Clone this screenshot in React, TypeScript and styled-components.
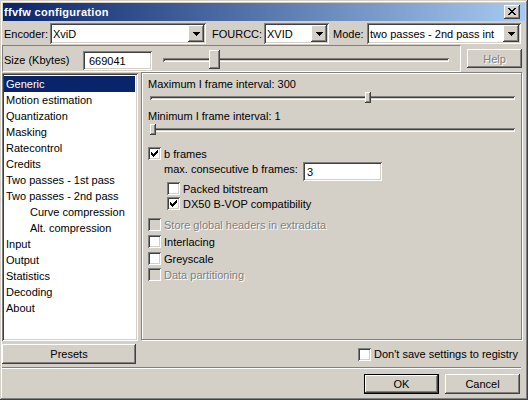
import styled, { createGlobalStyle } from "styled-components";

const GlobalStyle = createGlobalStyle`
  html, body {
    margin: 0;
    padding: 0;
    background: #d4d0c8;
  }
  body {
    font-family: "Liberation Sans", Arial, sans-serif;
    font-size: 11px;
    color: #000;
  }
`;

const raised = `
  box-shadow: inset -1px -1px #404040, inset 1px 1px #fff,
    inset -2px -2px #808080, inset 2px 2px #d4d0c8;
`;

const sunken = `
  box-shadow: inset 1px 1px #808080, inset -1px -1px #fff,
    inset 2px 2px #404040, inset -2px -2px #d4d0c8;
`;

const Window = styled.div`
  box-sizing: border-box;
  width: 528px;
  height: 400px;
  padding: 2px;
  background: #d4d0c8;
  box-shadow: inset -1px -1px #404040, inset 1px 1px #d4d0c8,
    inset -2px -2px #808080, inset 2px 2px #fff;
  display: flex;
  flex-direction: column;
`;

const TitleBar = styled.div`
  margin: 1px 1px 0;
  height: 18px;
  padding: 0 5px 0 1px;
  display: flex;
  align-items: center;
  justify-content: space-between;
  background: linear-gradient(to right, #0a246a, #a6caf0);
  color: #fff;
  font-weight: bold;
  font-size: 11px;
  letter-spacing: 0.3px;
`;

const CloseButton = styled.div`
  width: 16px;
  height: 14px;
  background: #d4d0c8;
  ${raised}
  display: flex;
  align-items: center;
  justify-content: center;
  padding-bottom: 1px;
  box-sizing: border-box;
`;

const Body = styled.div`
  padding-right: 4px;
  display: flex;
  flex-direction: column;
`;

const TopRow = styled.div`
  display: grid;
  grid-template-columns: 48px 156px 58px 65px 38px 154px;
  height: 21px;
  margin-top: 2px;
  align-items: center;
`;

const Label = styled.span<{ $indent?: number }>`
  padding-left: ${(p) => p.$indent ?? 0}px;
  white-space: nowrap;
`;

const Combo = styled.div`
  box-sizing: border-box;
  height: 21px;
  padding: 2px;
  background: #fff;
  ${sunken}
  display: flex;
  align-items: center;
`;

const ComboText = styled.span`
  flex: 1;
  padding-left: 1px;
  white-space: nowrap;
  overflow: hidden;
`;

const DropButton = styled.div`
  width: 16px;
  height: 17px;
  background: #d4d0c8;
  ${raised}
  display: flex;
  align-items: center;
  justify-content: center;
`;

const SizeRow = styled.div`
  display: flex;
  height: 27px;
  margin-top: 1px;
`;

const SizeFrame = styled.div`
  box-sizing: border-box;
  width: 459px;
  height: 27px;
  padding-top: 2px;
  border: 1px solid;
  border-color: #808080 #fff #fff #808080;
  display: flex;
  align-items: center;
`;

const SizeLabel = styled.span`
  width: 79px;
  padding-left: 1px;
  white-space: nowrap;
`;

const Edit = styled.div<{ $width: number }>`
  box-sizing: border-box;
  width: ${(p) => p.$width}px;
  height: 19px;
  padding: 0 4px;
  background: #fff;
  ${sunken}
  display: flex;
  align-items: center;
`;

const SizeEdit = styled(Edit)`
  align-self: flex-end;
  margin-bottom: 1px;
  padding-left: 6px;
`;

const SliderBox = styled.div<{ $height: number; $pad: number }>`
  position: relative;
  flex: 1;
  height: ${(p) => p.$height}px;
  margin: 0 ${(p) => p.$pad}px;
  display: flex;
  align-items: center;
`;

const Channel = styled.div`
  flex: 1;
  height: 4px;
  box-shadow: inset 1px 1px #808080, inset -1px -1px #fff,
    inset 2px 2px #404040;
`;

const Thumb = styled.div<{ $w: number; $h: number; $pos: number }>`
  position: absolute;
  top: 0;
  left: calc(${(p) => p.$pos} * (100% - ${(p) => p.$w}px));
  width: ${(p) => p.$w}px;
  height: ${(p) => p.$h}px;
  background: #d4d0c8;
  ${raised}
`;

const Button = styled.div<{ $width: number; $default?: boolean }>`
  box-sizing: border-box;
  width: ${(p) => p.$width}px;
  height: 20px;
  background: #d4d0c8;
  display: flex;
  align-items: center;
  justify-content: center;
  ${(p) =>
    p.$default
      ? `box-shadow: inset 0 0 0 1px #000, inset -2px -2px #404040, inset 2px 2px #fff,
          inset -3px -3px #808080;`
      : raised}
`;

const HelpButton = styled(Button)`
  margin: 4px 0 0 6px;
  height: 19px;
  color: #808080;
  text-shadow: 1px 1px #fff;
`;

const Main = styled.div`
  display: flex;
  height: 269px;
`;

const List = styled.div`
  box-sizing: border-box;
  width: 136px;
  height: 268px;
  margin-top: 1px;
  padding: 3px 2px 2px;
  background: #fff;
  ${sunken}
  display: flex;
  flex-direction: column;
`;

const Item = styled.div<{ $indent?: number; $selected?: boolean }>`
  height: 16px;
  line-height: 16px;
  margin-right: 1px;
  padding-left: ${(p) => 2 + (p.$indent ?? 0)}px;
  white-space: nowrap;
  background: ${(p) => (p.$selected ? "#0a246a" : "transparent")};
  color: ${(p) => (p.$selected ? "#fff" : "#000")};
`;

const Panel = styled.div`
  box-sizing: border-box;
  flex: 1;
  height: 268px;
  margin-left: 3px;
  padding: 5px 6px 0;
  border: 1px solid #808080;
  box-shadow: 1px 1px 0 #fff, inset 1px 1px 0 #fff;
  display: flex;
  flex-direction: column;
`;

const PanelLabel = styled.div<{ $top: number }>`
  height: 13px;
  line-height: 13px;
  margin-top: ${(p) => p.$top}px;
`;

const PanelSlider = styled.div<{ $top: number }>`
  display: flex;
  height: 11px;
  margin-top: ${(p) => p.$top}px;
  padding-left: 2px;
`;

const CheckRow = styled.div<{ $top: number; $indent?: number; $disabled?: boolean }>`
  display: flex;
  align-items: center;
  height: 13px;
  margin-top: ${(p) => p.$top}px;
  padding-left: ${(p) => p.$indent ?? 0}px;
  color: ${(p) => (p.$disabled ? "#808080" : "#000")};
  text-shadow: ${(p) => (p.$disabled ? "1px 1px #fff" : "none")};
  white-space: nowrap;
`;

const Box = styled.div<{ $disabled?: boolean }>`
  box-sizing: border-box;
  width: 13px;
  height: 13px;
  margin-right: 3px;
  flex-shrink: 0;
  background: ${(p) => (p.$disabled ? "#d4d0c8" : "#fff")};
  ${sunken}
  display: flex;
  align-items: center;
  justify-content: center;
`;

const FieldRow = styled.div`
  display: flex;
  align-items: flex-start;
  height: 19px;
  margin-top: 2px;
  padding-left: 16px;
`;

const FieldLabel = styled.span`
  width: 139px;
  line-height: 13px;
  padding-top: 1px;
  white-space: nowrap;
`;

const BottomRow = styled.div`
  display: flex;
  align-items: center;
  height: 26px;
`;

const RegistryCheck = styled.div`
  margin-left: auto;
  margin-right: 4px;
  display: flex;
  align-items: center;
  white-space: nowrap;
`;

const Separator = styled.div`
  height: 1px;
  margin-right: 1px;
  background: #808080;
  border-bottom: 1px solid #fff;
`;

const ButtonRow = styled.div`
  display: flex;
  justify-content: flex-end;
  gap: 6px;
  margin: 5px 2px 0 0;
`;

const CloseGlyph = () => (
  <svg width="8" height="7" viewBox="0 0 8 7" shapeRendering="crispEdges">
    <path d="M0 0h2v1h-2z M6 0h2v1h-2z M1 1h2v1h-2z M5 1h2v1h-2z M2 2h4v1h-4z M3 3h2v1h-2z M2 4h4v1h-4z M1 5h2v1h-2z M5 5h2v1h-2z M0 6h2v1h-2z M6 6h2v1h-2z" fill="#000" />
  </svg>
);

const DropArrow = () => (
  <svg width="7" height="4" viewBox="0 0 7 4" shapeRendering="crispEdges">
    <path d="M0 0h7v1h-7z M1 1h5v1h-5z M2 2h3v1h-3z M3 3h1v1h-1z" fill="#000" />
  </svg>
);

const CheckMark = () => (
  <svg width="7" height="7" viewBox="0 0 7 7" shapeRendering="crispEdges">
    <path d="M6 0h1v1h-1z M5 1h2v1h-2z M0 2h1v1h-1z M4 2h3v1h-3z M0 3h2v1h-2z M3 3h3v1h-3z M0 4h5v1h-5z M1 5h3v1h-3z M2 6h1v1h-1z" fill="#000" />
  </svg>
);

const ComboBox = ({ text }: { text: string }) => (
  <Combo>
    <ComboText>{text}</ComboText>
    <DropButton>
      <DropArrow />
    </DropButton>
  </Combo>
);

type CheckProps = {
  label: string;
  checked?: boolean;
  disabled?: boolean;
  top: number;
  indent?: number;
};

const Check = ({ label, checked, disabled, top, indent }: CheckProps) => (
  <CheckRow $top={top} $indent={indent} $disabled={disabled}>
    <Box $disabled={disabled}>{checked && <CheckMark />}</Box>
    {label}
  </CheckRow>
);

const pages: { name: string; indent?: number }[] = [
  { name: "Generic" },
  { name: "Motion estimation" },
  { name: "Quantization" },
  { name: "Masking" },
  { name: "Ratecontrol" },
  { name: "Credits" },
  { name: "Two passes - 1st pass" },
  { name: "Two passes - 2nd pass" },
  { name: "Curve compression", indent: 24 },
  { name: "Alt. compression", indent: 24 },
  { name: "Input" },
  { name: "Output" },
  { name: "Statistics" },
  { name: "Decoding" },
  { name: "About" },
];

const App = () => {
  return (
    <>
      <GlobalStyle />
      <Window>
        <TitleBar>
          <span>ffvfw configuration</span>
          <CloseButton>
            <CloseGlyph />
          </CloseButton>
        </TitleBar>
        <Body>
          <TopRow>
            <Label $indent={2}>Encoder:</Label>
            <ComboBox text="XviD" />
            <Label $indent={6}>FOURCC:</Label>
            <ComboBox text="XVID" />
            <Label $indent={4}>Mode:</Label>
            <ComboBox text="two passes - 2nd pass int" />
          </TopRow>

          <SizeRow>
            <SizeFrame>
              <SizeLabel>Size (Kbytes)</SizeLabel>
              <SizeEdit $width={69}>669041</SizeEdit>
              <SliderBox $height={19} $pad={11}>
                <Channel />
                <Thumb $w={11} $h={19} $pos={0.166} />
              </SliderBox>
            </SizeFrame>
            <HelpButton $width={55}>Help</HelpButton>
          </SizeRow>

          <Main>
            <List>
              {pages.map((p, i) => (
                <Item key={p.name} $indent={p.indent} $selected={i === 0}>
                  {p.name}
                </Item>
              ))}
            </List>
            <Panel>
              <PanelLabel $top={0}>Maximum I frame interval: 300</PanelLabel>
              <PanelSlider $top={1}>
                <SliderBox $height={11} $pad={0}>
                  <Channel />
                  <Thumb $w={6} $h={11} $pos={0.6} />
                </SliderBox>
              </PanelSlider>
              <PanelLabel $top={7}>Minimum I frame interval: 1</PanelLabel>
              <PanelSlider $top={1}>
                <SliderBox $height={11} $pad={0}>
                  <Channel />
                  <Thumb $w={6} $h={11} $pos={0} />
                </SliderBox>
              </PanelSlider>
              <Check top={12} label="b frames" checked />
              <FieldRow>
                <FieldLabel>max. consecutive b frames:</FieldLabel>
                <Edit $width={79}>3</Edit>
              </FieldRow>
              <Check top={1} indent={19} label="Packed bitstream" />
              <Check top={2} indent={19} label="DX50 B-VOP compatibility" checked />
              <Check top={8} label="Store global headers in extradata" disabled />
              <Check top={4} label="Interlacing" />
              <Check top={4} label="Greyscale" />
              <Check top={3} label="Data partitioning" disabled />
            </Panel>
          </Main>

          <BottomRow>
            <Button $width={134}>Presets</Button>
            <RegistryCheck>
              <Box>{null}</Box>
              Don't save settings to registry
            </RegistryCheck>
          </BottomRow>
          <Separator />
          <ButtonRow>
            <Button $width={75} $default>
              OK
            </Button>
            <Button $width={75}>Cancel</Button>
          </ButtonRow>
        </Body>
      </Window>
    </>
  );
};

export default App;
